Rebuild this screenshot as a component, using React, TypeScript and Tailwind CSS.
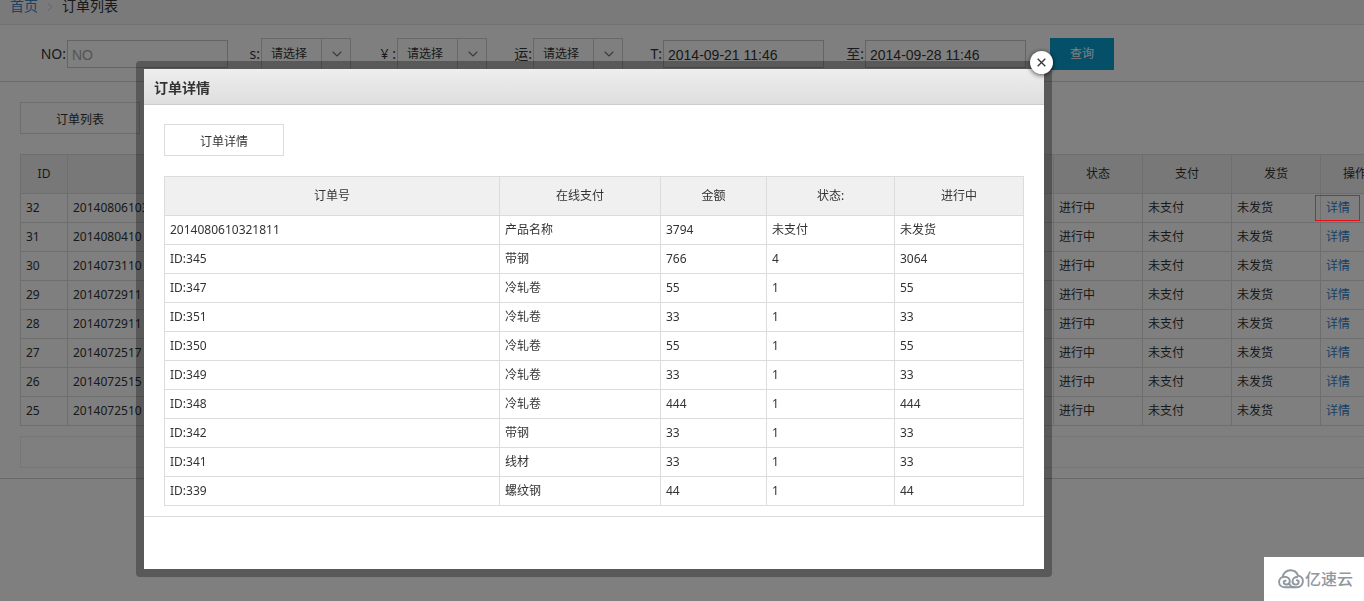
import type { ReactNode } from "react";
import { ChevronDown, ChevronRight } from "lucide-react";

const orders = [
  { id: 32, no: "2014080610321811" },
  { id: 31, no: "2014080410" },
  { id: 30, no: "2014073110" },
  { id: 29, no: "2014072911" },
  { id: 28, no: "2014072911" },
  { id: 27, no: "2014072517" },
  { id: 26, no: "2014072515" },
  { id: 25, no: "2014072510" },
];

const detailHead = ["订单号", "在线支付", "金额", "状态:", "进行中"];

const detailRows = [
  ["2014080610321811", "产品名称", "3794", "未支付", "未发货"],
  ["ID:345", "带钢", "766", "4", "3064"],
  ["ID:347", "冷轧卷", "55", "1", "55"],
  ["ID:351", "冷轧卷", "33", "1", "33"],
  ["ID:350", "冷轧卷", "55", "1", "55"],
  ["ID:349", "冷轧卷", "33", "1", "33"],
  ["ID:348", "冷轧卷", "444", "1", "444"],
  ["ID:342", "带钢", "33", "1", "33"],
  ["ID:341", "线材", "33", "1", "33"],
  ["ID:339", "螺纹钢", "44", "1", "44"],
];

function Th({ children }: { children: ReactNode }) {
  return (
    <th scope="col" className="h-[39px] border border-[#dcdcdc] bg-[#f0f0f0] p-0 text-center font-normal">
      {children}
    </th>
  );
}

function Td({ children }: { children: ReactNode }) {
  return <td className="h-[29px] border border-[#dcdcdc] px-[5px] py-0">{children}</td>;
}

function TabButton({ children }: { children: ReactNode }) {
  return (
    <button type="button" className="block h-8 w-[120px] border border-[#dcdcdc] bg-white pt-1 text-center text-xs">
      {children}
    </button>
  );
}

function TextField({ id, label, value, placeholder }: { id: string; label: string; value?: string; placeholder?: string }) {
  return (
    <div className="flex items-center justify-end gap-px">
      <label htmlFor={id}>{label}</label>
      <input
        id={id}
        type="text"
        defaultValue={value}
        placeholder={placeholder}
        className="h-7 w-[161px] border border-[#c8c8c8] bg-white px-1 pt-0.5 font-['Liberation_Sans',sans-serif] text-sm placeholder:text-[#a9a9a9]"
      />
    </div>
  );
}

function SelectField({ id, label }: { id: string; label: string }) {
  return (
    <div className="flex items-center justify-end gap-px">
      <label htmlFor={id}>{label}</label>
      <div className="relative">
        <select id={id} className="block h-8 w-[90px] appearance-none border border-[#d0d0d0] bg-white pl-[9px] text-xs">
          <option>请选择</option>
        </select>
        <span className="pointer-events-none absolute inset-y-0 right-0 flex w-[30px] items-center justify-center border-l border-[#d0d0d0]">
          <ChevronDown className="size-4 text-[#777]" strokeWidth={1.75} />
        </span>
      </div>
    </div>
  );
}

function OrderPage() {
  return (
    <div>
      <nav className="flex h-[25px] items-start gap-[5px] border-b border-[#e4e4e4] bg-[#f5f5f5] pl-2.5 text-sm leading-3">
        <a href="#home" className="text-[#3a87c8]">首页</a>
        <ChevronRight className="size-3.5 text-[#bbb]" strokeWidth={1.5} />
        <span>订单列表</span>
      </nav>

      <form className="grid h-[57px] grid-cols-[202px_123px_136px_136px_201px_202px_auto] items-center justify-start border-b border-[#d6d6d6] pt-0.5 pl-[26px] text-sm">
        <TextField id="no" label="NO:" placeholder="NO" />
        <SelectField id="status" label="s:" />
        <SelectField id="pay" label="¥ :" />
        <SelectField id="ship" label="运:" />
        <TextField id="from" label="T:" value="2014-09-21 11:46" />
        <TextField id="to" label="至:" value="2014-09-28 11:46" />
        <button type="button" className="ml-6 h-8 w-16 bg-[#0a9ed2] text-xs text-white">查询</button>
      </form>

      <main className="border-b border-[#d0d0d0] pt-5 pb-2.5 pl-5">
        <TabButton>订单列表</TabButton>
        {/* the list runs a little past the right edge of the window */}
        <div className="-mr-[26px] pt-5">
          <table className="w-full table-fixed border-collapse text-xs">
            <colgroup>
              <col className="w-[47px]" />
              <col />
              <col className="w-[89px]" />
              <col className="w-[89px]" />
              <col className="w-[89px]" />
              <col className="w-[69px]" />
            </colgroup>
            <thead>
              <tr>
                <Th>ID</Th>
                <Th>订单号</Th>
                <Th>状态</Th>
                <Th>支付</Th>
                <Th>发货</Th>
                <Th>操作</Th>
              </tr>
            </thead>
            <tbody>
              {orders.map((order, i) => (
                <tr key={order.id}>
                  <Td>{order.id}</Td>
                  <Td>{order.no}</Td>
                  <Td>进行中</Td>
                  <Td>未支付</Td>
                  <Td>未发货</Td>
                  <Td>
                    <a href={`#order-${order.id}`} className="relative inline-block text-[#2f7ed0]">
                      详情
                      {i === 0 && (
                        <span className="absolute -inset-y-[5px] -right-2.5 -left-[11px] z-20 border border-[#e60f18]" />
                      )}
                    </a>
                  </Td>
                </tr>
              ))}
            </tbody>
          </table>
          <div className="mt-2.5 h-8 border border-[#ececec]" />
        </div>
      </main>
    </div>
  );
}

function DetailDialog() {
  return (
    <div
      role="dialog"
      aria-labelledby="detail-title"
      className="relative w-[916px] rounded-[4px] border-8 border-black/30 bg-white bg-clip-padding"
    >
      <header className="flex h-9 items-center border-b border-[#ccc] bg-linear-to-b from-[#eee] to-[#dedede] pt-0.5 pl-2.5">
        <h2 id="detail-title" className="text-sm font-bold">订单详情</h2>
      </header>
      <button
        type="button"
        aria-label="关闭"
        className="absolute -top-[18px] -right-[9px] flex size-[23px] items-center justify-center rounded-full bg-white shadow-[0_1px_5px_rgba(0,0,0,0.7)]"
      >
        <svg viewBox="0 0 9 9" className="size-[9px]" stroke="#333" strokeWidth="1.3" fill="none">
          <path d="M.7.7l7.6 7.6M8.3.7L.7 8.3" />
        </svg>
      </button>

      <div className="border-b border-[#dcdcdc] px-5 pt-[19px] pb-2.5">
        <TabButton>订单详情</TabButton>
        <table className="mt-5 w-full table-fixed border-collapse text-xs">
          <colgroup>
            <col className="w-[39%]" />
            <col className="w-[161px]" />
            <col className="w-[106px]" />
            <col className="w-[128px]" />
            <col className="w-[129px]" />
          </colgroup>
          <thead>
            <tr>
              {detailHead.map((name) => (
                <Th key={name}>{name}</Th>
              ))}
            </tr>
          </thead>
          <tbody>
            {detailRows.map((row) => (
              <tr key={row[0]}>
                {row.map((cell, i) => (
                  <Td key={i}>{cell}</Td>
                ))}
              </tr>
            ))}
          </tbody>
        </table>
      </div>
      <footer className="h-[52px]" />
    </div>
  );
}

function CloudLogo() {
  return (
    <svg viewBox="0 0 26 20" className="h-5 w-[26px]" fill="none" stroke="#8f979f" strokeWidth="1.9" strokeLinecap="round">
      <path d="M4.500 8.300C5 4.300 8.400 1.200 12.500 1.200c3.700 0 6.500 2.100 7.500 5.400 2.900.5 4.900 2.800 4.900 5.700 0 3.500-2.700 6-6 6H7.200C3.600 18.300 1.100 16 1.100 12.900c0-3 2.400-5.200 5.500-5.200 3 0 5.200 2.100 5.200 4.500 0 2-1.500 3.300-3.300 3.300-1.600 0-2.800-.9-2.800-2.200 0-1 .8-1.700 1.900-1.500" />
      <path d="M11.200 14.500c.8 2.200 2.700 3.600 5 3.700M18.800 11.300c1.100 0 1.900.8 1.900 1.800 0 1.500-1.200 2.500-2.800 2.500-2 0-3.400-1.500-3.400-3.400 0-2.400 2.200-4.200 4.800-4.200" />
    </svg>
  );
}

export default function App() {
  return (
    <div className="relative min-h-screen overflow-hidden bg-white font-['Noto_Sans','Noto_Sans_CJK_SC',sans-serif] text-[#333]">
      <OrderPage />
      <div className="fixed inset-0 z-10 flex items-start bg-black/50 pt-[61px] pl-[136px]">
        <DetailDialog />
      </div>
      <div className="fixed right-0 bottom-0 z-30 flex h-11 w-[100px] items-center justify-end gap-px bg-white pr-[11px] text-[16px] font-medium text-[#8f979f]">
        <CloudLogo />
        <span>亿速云</span>
      </div>
    </div>
  );
}
